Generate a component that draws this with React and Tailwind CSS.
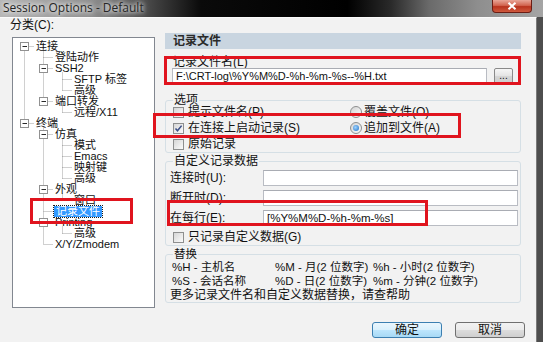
import React from "react";

const rows = [
  [0, true, "连接"],
  [1, false, "登陆动作"],
  [1, true, "SSH2"],
  [2, false, "SFTP 标签"],
  [2, false, "高级"],
  [1, true, "端口转发"],
  [2, false, "远程/X11"],
  [0, true, "终端"],
  [1, true, "仿真"],
  [2, false, "模式"],
  [2, false, "Emacs"],
  [2, false, "映射键"],
  [2, false, "高级"],
  [1, true, "外观"],
  [2, false, "窗口"],
  [1, false, "记录文件", true],
  [1, true, "Printing"],
  [2, false, "高级"],
  [1, false, "X/Y/Zmodem"],
];

const padClass = ["pl-[23px]", "pl-[42px]", "pl-[61px]"];

function TreeLines() {
  const lx = (l) => 11.5 + 19 * l;
  const ry = (i) => 8.5 + 11 * i;
  const lines = [];
  const boxes = [];
  rows.forEach((r, i) => {
    const [l, kids] = r;
    const x = lx(l);
    const y = ry(i);
    lines.push(
      <line key={"h" + i} x1={kids ? x + 4 : x} y1={y} x2={x + 10} y2={y} />
    );
    let j = i - 1;
    while (j >= 0 && rows[j][0] > l) j--;
    if (j >= 0) {
      const startY = rows[j][0] === l ? ry(j) : ry(j) + 4;
      lines.push(<line key={"v" + i} x1={x} y1={startY} x2={x} y2={y} />);
    }
    if (kids) boxes.push([x, y, i]);
  });
  return (
    <svg className="absolute inset-0" width="141" height="269">
      <g stroke="#a0a0a0" strokeWidth="1" strokeDasharray="1 1">{lines}</g>
      {boxes.map(([x, y, i]) => (
        <g key={"b" + i}>
          <rect x={x - 4} y={y - 4} width="8" height="8" fill="#fff" stroke="#919191" />
          <line x1={x - 2} y1={y} x2={x + 2.5} y2={y} stroke="#2a2a2a" />
        </g>
      ))}
    </svg>
  );
}

function Check({ checked }) {
  return (
    <span className="w-[11px] h-[11px] shrink-0 border border-[#8e8f8f] bg-[linear-gradient(135deg,#d6d6d6,#fbfbfb)] flex items-center justify-center">
      {checked && (
        <svg width="9" height="9" viewBox="0 0 9 9">
          <path d="M1.5 4.5 L3.5 6.8 L7.6 1.6" fill="none" stroke="#3a4e86" strokeWidth="1.5" />
        </svg>
      )}
    </span>
  );
}

function Radio({ on }) {
  return (
    <span className="w-[12px] h-[12px] shrink-0 rounded-full border border-[#8e8f8f] bg-[linear-gradient(135deg,#d4d4d4,#fbfbfb)] flex items-center justify-center">
      {on && <span className="w-[6px] h-[6px] rounded-full bg-[radial-gradient(circle_at_40%_40%,#9fd4ff,#1f6fc4)]" />}
    </span>
  );
}

function Group({ label, className, children }) {
  return (
    <div className={"ml-[5px] w-[356px] border border-[#d5dfe5] rounded-[3px] flex flex-col " + className}>
      <div className="-mt-[7px] ml-[7px] w-fit px-[1px] h-[12px] leading-[12px] bg-[#f2f2f2]">{label}</div>
      {children}
    </div>
  );
}

function Input({ className, children }) {
  return (
    <div className={"bg-white border border-[#b9bcc3] border-t-[#a9acb3] flex items-center pl-[3px] leading-[12px] whitespace-nowrap overflow-hidden " + className}>
      {children}
    </div>
  );
}

export default function App() {
  return (
    <div className="w-[543px] h-[342px] overflow-hidden relative flex flex-col bg-[#4e4e4e] font-['Liberation_Sans','Noto_Sans_CJK_SC',sans-serif] text-[12px] text-[#111]">
      {/* title bar */}
      <div className="h-[17px] shrink-0 flex items-start bg-[linear-gradient(90deg,#b6b6b6_0%,#8e8e8e_17%,#444_28%,#0a0a0a_37%,#000_64%,#2a2a2a_72%,#6a6a6a_79%,#8e8e8e_88%,#a5a5a5_100%)]">
        <span className="pl-[3px] pt-[1px] text-[12px] leading-[14px] font-['Open_Sans',sans-serif] text-[#262626] [text-shadow:0_0_4px_#fff,0_0_7px_#fff]">
          Session Options - Default
        </span>
        <div className="ml-auto mr-[11px] w-[40px] h-[13px] rounded-b-[4px] border border-t-0 border-[#6b1d14] bg-[linear-gradient(180deg,#e8a597_0%,#d26550_45%,#b8321d_55%,#cf5a3e_100%)] flex items-center justify-center">
          <svg width="10" height="8" viewBox="0 0 10 8">
            <path d="M1.5 0.8 L8.5 7.2 M8.5 0.8 L1.5 7.2" stroke="#fff" strokeWidth="2" />
          </svg>
        </div>
      </div>

      {/* body */}
      <div className="flex h-[325px]">
        <div className="w-[537px] bg-[#f2f2f2] border-t border-t-[#fbfbfb] border-r border-r-[#7a7a7a] flex">
          {/* left column */}
          <div className="w-[160px] flex flex-col">
            <div className="pl-[10px] mt-[1px] h-[12px] leading-[12px]">分类(C):</div>
            <div className="ml-[12px] mt-[6px] w-[143px] h-[271px] border border-[#828790] bg-white relative">
              <TreeLines />
              <div className="relative pt-[3px] flex flex-col text-[11px]">
                {rows.map(([l, kids, label, sel], i) => (
                  <div key={i} className={"h-[11px] flex items-center whitespace-nowrap " + padClass[l]}>
                    {sel ? (
                      <span className="-ml-[1px] px-[2px] h-[11px] leading-[11px] bg-[#3399ff] text-white outline-1 outline-dotted outline-[#1a1a1a]">
                        {label}
                      </span>
                    ) : (
                      <span className="leading-[11px]">{label}</span>
                    )}
                  </div>
                ))}
              </div>
            </div>
          </div>

          {/* right column */}
          <div className="w-[376px] flex flex-col">
            <div className="mt-[15px] ml-[5px] w-[356px] h-[16px] bg-[#c9d5e0] flex items-center pl-[8px] font-bold text-[#2b2b2b] leading-[12px]">
              记录文件
            </div>
            <div className="mt-[7px] pl-[13px] h-[12px] leading-[12px]">记录文件名(L)</div>
            <div className="flex items-start">
              <Input className="ml-[12px] w-[315px] h-[15px] text-[11px]">F:\CRT-log\%Y%M%D-%h-%m-%s--%H.txt</Input>
              <div className="ml-[7px] w-[19px] h-[16px] rounded-[2px] border border-[#8a8a8a] bg-[linear-gradient(180deg,#f6f6f6,#e4e4e4_50%,#d6d6d6_50%,#cdcdcd)] flex items-end justify-center leading-[10px] pb-[2px] text-[10px]">
                ...
              </div>
            </div>

            <Group label="选项" className="mt-[16px]">
              <div className="-mt-[2px]" />
              {[
                ["提示文件名(P)", false, "覆盖文件(O)", false],
                ["在连接上启动记录(S)", true, "追加到文件(A)", true],
                ["原始记录", false, null],
              ].map(([a, ca, b, rb], i) => (
                <div key={i} className="h-[16px] flex items-center whitespace-nowrap">
                  <div className="w-[184px] pl-[7px] flex items-center gap-[4px]">
                    <Check checked={ca} />
                    <span className="leading-[12px]">{a}</span>
                  </div>
                  {b && (
                    <div className="flex items-center gap-[2px]">
                      <Radio on={rb} />
                      <span className="leading-[12px]">{b}</span>
                    </div>
                  )}
                </div>
              ))}
            </Group>

            <Group label="自定义记录数据" className="mt-[8px]">
              <div className="mt-[3px] flex flex-col gap-[4px]">
                {[
                  ["连接时(U):", ""],
                  ["断开时(D):", ""],
                  ["在每行(E):", "[%Y%M%D-%h-%m-%s]"],
                ].map(([l, v], i) => (
                  <div key={i} className="h-[16px] flex items-center">
                    <span className="w-[97px] pl-[4px] leading-[12px]">{l}</span>
                    <Input className="w-[255px] h-[16px] text-[11.5px]">{v}</Input>
                  </div>
                ))}
              </div>
              <div className="mt-[3px] h-[16px] pl-[7px] flex items-center gap-[4px]">
                <Check />
                <span className="leading-[12px]">只记录自定义数据(G)</span>
              </div>
            </Group>

            <Group label="替换" className="mt-[8px] text-[11.5px]">
              {[
                ["%H - 主机名", "%M - 月(2 位数字)", "%h - 小时(2 位数字)"],
                ["%S - 会话名称", "%D - 日(2 位数字)", "%m - 分钟(2 位数字)"],
              ].map((r, i) => (
                <div key={i} className="h-[14px] pl-[6px] flex items-center whitespace-nowrap leading-[12px]">
                  <span className="w-[103px]">{r[0]}</span>
                  <span className="w-[98px]">{r[1]}</span>
                  <span>{r[2]}</span>
                </div>
              ))}
              <div className="h-[14px] pl-[4px] flex items-center whitespace-nowrap leading-[12px] text-[12px]">
                更多记录文件名和自定义数据替换，请查帮助
              </div>
            </Group>

            <div className="mt-[19px] ml-[212px] flex gap-[13px]">
              <div className="w-[70px] h-[16px] rounded-[3px] border border-[#3c7fb1] bg-[linear-gradient(180deg,#eaf6fd,#d9f0fc_50%,#bee6fd_50%,#a7d9f5)] flex items-center justify-center leading-[12px]">
                确定
              </div>
              <div className="w-[70px] h-[16px] rounded-[3px] border border-[#707070] bg-[linear-gradient(180deg,#f2f2f2,#ebebeb_50%,#dddddd_50%,#cfcfcf)] flex items-center justify-center leading-[12px]">
                取消
              </div>
            </div>
          </div>
        </div>
        <div className="flex-1" />
      </div>

      {/* red annotation boxes */}
      <div className="absolute left-[164px] top-[56px] w-[357px] h-[29px] border-[3px] border-[#e0141e]" />
      <div className="absolute left-[153px] top-[113px] w-[308px] h-[25px] border-[3px] border-[#e0141e]" />
      <div className="absolute left-[167px] top-[200px] w-[261px] h-[26px] border-[3px] border-[#e0141e]" />
      <div className="absolute left-[30px] top-[198px] w-[103px] h-[26px] border-[3px] border-[#e0141e]" />
    </div>
  );
}
